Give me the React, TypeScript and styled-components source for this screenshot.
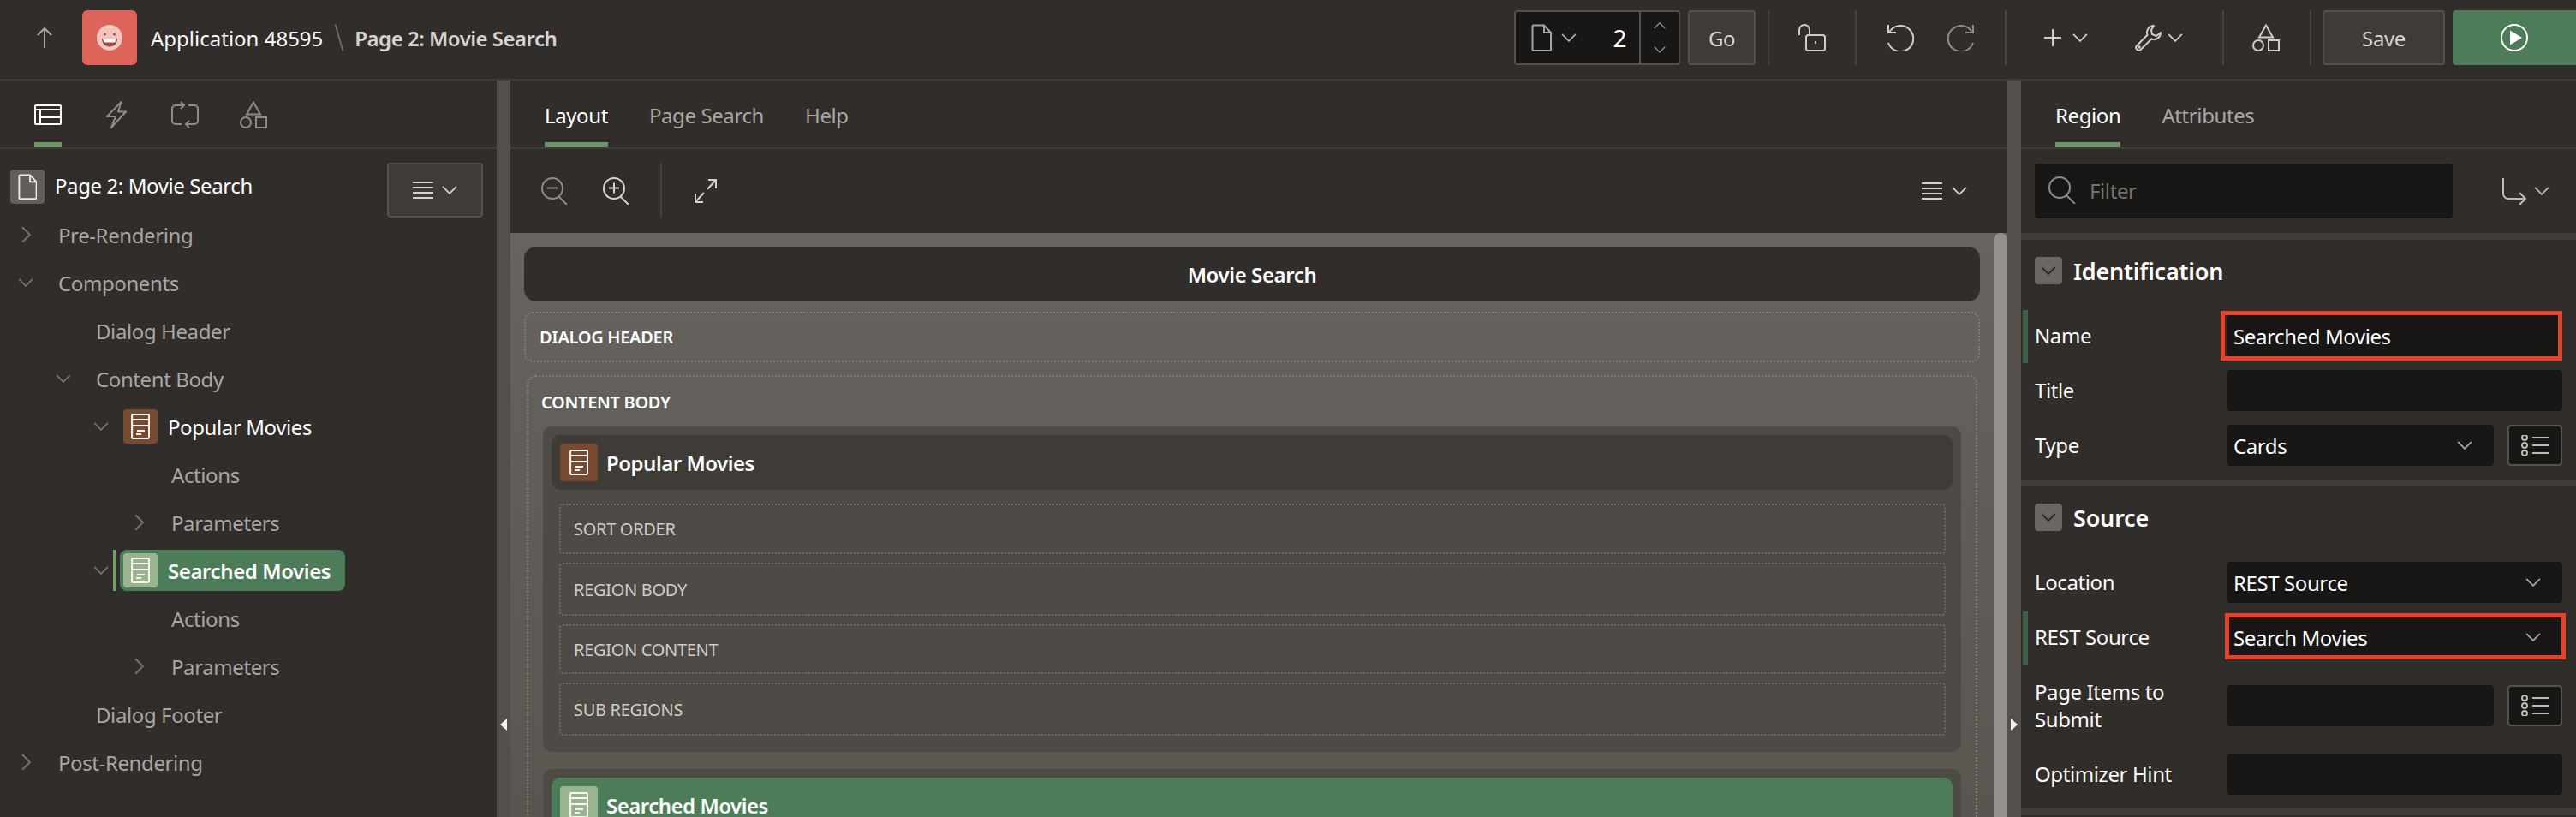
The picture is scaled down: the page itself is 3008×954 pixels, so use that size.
import * as React from 'react';
import styled, { createGlobalStyle } from 'styled-components';

const GlobalStyle = createGlobalStyle`
  html, body {
    margin: 0;
    height: 100%;
    background: #312d2a;
    font-family: "Noto Sans", "Open Sans", sans-serif;
    letter-spacing: -0.4px;
    color: #fff;
  }
  svg { display: block; flex: none; }
`;

const Page = styled.div`
  height: 100vh;
  display: flex;
  flex-direction: column;
  overflow: hidden;
`;

const Header = styled.header`
  height: 88px;
  padding-bottom: 4px;
  flex: none;
  display: flex;
  align-items: center;
  border-bottom: 2px solid #3f3b37;
  box-sizing: content-box;
`;

const UpButton = styled.div`
  width: 96px;
  display: flex;
  justify-content: center;
  padding-left: 8px;
  box-sizing: border-box;
  color: #a9a6a2;
`;

const Logo = styled.div`
  width: 64px;
  height: 64px;
  border-radius: 6px;
  background: #dc6459;
  display: flex;
  align-items: center;
  justify-content: center;
`;

const Crumbs = styled.div`
  display: flex;
  align-items: center;
  margin-left: 16px;
  font-size: 24px;
`;

const CrumbApp = styled.span`
  color: #fbf9f8;
  letter-spacing: 0;
`;

const CrumbSlash = styled.span`
  width: 2px;
  height: 32px;
  margin: 0 17px 0 18px;
  background: #6b6762;
  transform: rotate(-16deg);
`;

const CrumbPage = styled.span`
  color: #d6d3cf;
  font-weight: 600;
  letter-spacing: -0.5px;
`;

const Toolbar = styled.div`
  margin-left: auto;
  display: flex;
  align-items: center;
  height: 64px;
`;

const PageSelector = styled.div`
  width: 194px;
  height: 64px;
  box-sizing: border-box;
  border: 2px solid #54504b;
  border-radius: 4px;
  background: #181715;
  display: flex;
  align-items: stretch;
`;

const PagePicker = styled.div`
  flex: 1;
  display: flex;
  align-items: center;
  gap: 11px;
  padding-left: 18px;
  color: #a9a6a2;
  position: relative;
`;

const PageNumber = styled.span`
  margin-left: auto;
  margin-right: 15px;
  font-size: 28px;
  color: #fff;
`;

const Stepper = styled.div`
  width: 46px;
  border-left: 2px solid #54504b;
  display: flex;
  flex-direction: column;
  align-items: center;
  justify-content: space-between;
  padding: 12px 0;
  box-sizing: border-box;
  color: #8f8b87;
`;

const Button = styled.div<{ $w: number; $ml?: number }>`
  width: ${p => p.$w}px;
  height: 64px;
  margin-left: ${p => p.$ml ?? 0}px;
  box-sizing: border-box;
  border: 2px solid #54504b;
  border-radius: 4px;
  background: #3f3c37;
  color: #d6d3cf;
  font-size: 24px;
  display: flex;
  align-items: center;
  justify-content: center;
`;

const RunButton = styled.div`
  width: 144px;
  height: 64px;
  margin-left: 9px;
  background: #4c7d58;
  border-radius: 4px 0 0 4px;
  display: flex;
  align-items: center;
  justify-content: center;
  color: #fff;
`;

const Sep = styled.div<{ $h?: number }>`
  width: 2px;
  height: ${p => p.$h ?? 64}px;
  background: #45413d;
  flex: none;
`;

const ToolGroup = styled.div<{ $l: number; $r: number; $gap: number }>`
  display: flex;
  align-items: center;
  padding: 0 ${p => p.$r}px 0 ${p => p.$l}px;
  gap: ${p => p.$gap}px;
  color: #d0cdc9;
`;

const IconPair = styled.div<{ $gap: number; $dim?: boolean }>`
  display: flex;
  align-items: center;
  gap: ${p => p.$gap}px;
  color: ${p => (p.$dim ? '#8f8b87' : 'inherit')};
`;

const Body = styled.div`
  flex: 1;
  min-height: 0;
  display: grid;
  grid-template-columns: 580px 16px 1748px 16px 648px;
`;

const Panel = styled.section`
  display: flex;
  flex-direction: column;
  min-width: 0;
  min-height: 0;
  overflow: hidden;
  position: relative;
`;

const Splitter = styled.div`
  background: #544f4b;
  position: relative;
`;

const SplitterArrow = styled.div<{ $right?: boolean }>`
  position: absolute;
  top: 745px;
  left: 4px;
  width: 0;
  height: 0;
  border-top: 7px solid transparent;
  border-bottom: 7px solid transparent;
  ${p => (p.$right ? 'border-left: 8px solid #f4f2f0;' : 'border-right: 8px solid #f4f2f0;')}
`;

const Tabs = styled.div<{ $gap: number; $pad: number }>`
  height: 78px;
  flex: none;
  display: flex;
  gap: ${p => p.$gap}px;
  padding-left: ${p => p.$pad}px;
  border-bottom: 2px solid #3f3b37;
`;

const Tab = styled.div<{ $active?: boolean }>`
  height: 78px;
  box-sizing: border-box;
  border-bottom: 6px solid ${p => (p.$active ? '#6f946b' : 'transparent')};
  display: flex;
  align-items: center;
  padding-top: 8px;
  font-size: 24px;
  color: ${p => (p.$active ? '#fff' : '#a9a6a2')};
`;

const TreeRoot = styled.div`
  height: 72px;
  flex: none;
  box-sizing: border-box;
  padding: 24px 0 0 12px;
  display: flex;
  align-items: flex-start;
  gap: 12px;
  font-size: 24px;
`;

const RootIcon = styled.div`
  width: 40px;
  height: 40px;
  background: #625e59;
  border-radius: 4px;
  display: flex;
  align-items: center;
  justify-content: center;
  color: #eeecea;
`;

const RootLabel = styled.span`
  line-height: 38px;
`;

const TreeMenu = styled(Button)`
  position: absolute;
  top: 96px;
  right: 16px;
  gap: 10px;
`;

const TreeRow = styled.div<{ $level: number }>`
  height: 56px;
  flex: none;
  display: flex;
  align-items: center;
  padding-left: ${p => 8 + p.$level * 44}px;
  font-size: 24px;
  color: #a9a6a2;
  position: relative;
`;

const Twisty = styled.div`
  width: 44px;
  flex: none;
  display: flex;
  justify-content: center;
  color: #75716c;
`;

const TreeLabel = styled.span`
  margin-left: 16px;
`;

const NodePill = styled.div<{ $selected?: boolean }>`
  height: 48px;
  display: flex;
  align-items: center;
  gap: 12px;
  padding: 0 17px 0 4px;
  border-radius: 8px;
  background: ${p => (p.$selected ? '#4c7d58' : 'transparent')};
  color: #fff;
  font-weight: ${p => (p.$selected ? 600 : 400)};
`;

const SelectedMark = styled.div`
  position: absolute;
  left: 132px;
  top: 4px;
  width: 4px;
  height: 48px;
  background: #6f9d6d;
`;

const RegionIcon = styled.div<{ $tone: 'brown' | 'green'; $size: number }>`
  width: ${p => p.$size}px;
  height: ${p => p.$size}px;
  flex: none;
  border-radius: 4px;
  background: ${p => (p.$tone === 'brown' ? '#794a32' : '#98b58f')};
  display: flex;
  align-items: center;
  justify-content: center;
  color: #f9f4ee;
`;

const CanvasTools = styled.div`
  height: 98px;
  flex: none;
  display: flex;
  align-items: center;
  padding: 0 47px 0 36px;
  color: #d6d3cf;
`;

const ZoomTool = styled.div<{ $dim?: boolean; $w: number }>`
  width: ${p => p.$w}px;
  color: ${p => (p.$dim ? '#8f8b87' : '#d6d3cf')};
`;

const Expand = styled.div`
  margin-left: 38px;
`;

const MenuTool = styled.div`
  margin-left: auto;
  display: flex;
  align-items: center;
  gap: 11px;
`;

const Canvas = styled.div`
  flex: 1;
  min-height: 0;
  position: relative;
  overflow: hidden;
  background: linear-gradient(#67635e, #59554f);
  padding: 16px 32px 0 16px;
`;

const Scrollbar = styled.div`
  position: absolute;
  top: 0;
  right: 0;
  bottom: 0;
  width: 16px;
  background: #94908c;
  border-radius: 8px 8px 0 0;
`;

const TitleBar = styled.div`
  height: 64px;
  background: #312d2a;
  border-radius: 14px;
  display: flex;
  align-items: center;
  justify-content: center;
  font-size: 24px;
  font-weight: 600;
`;

const Zone = styled.div`
  border: 2px dotted #807c77;
  border-radius: 10px;
  box-sizing: border-box;
  font-weight: 600;
  font-size: 20px;
  letter-spacing: -0.3px;
`;

const HeaderZone = styled(Zone)`
  height: 59px;
  margin-top: 12px;
  display: flex;
  align-items: center;
  padding-left: 16px;
`;

const BodyZone = styled(Zone)`
  margin: 15px 3px 0;
  padding: 0 17px;
  height: 600px;
  border-bottom: none;
`;

const BodyLabel = styled.div`
  height: 58px;
  display: flex;
  align-items: center;
  margin-left: -2px;
`;

const Region = styled.div`
  background: #4e4a46;
  border-radius: 10px;
  padding: 10px 10px 19px;
  margin-bottom: 20px;
`;

const RegionHead = styled.div<{ $selected?: boolean }>`
  height: 64px;
  border-radius: 10px;
  background: ${p => (p.$selected ? '#4c7d58' : '#3f3c37')};
  display: flex;
  align-items: center;
  gap: 10px;
  padding-left: 10px;
  font-size: 24px;
  font-weight: 600;
  letter-spacing: -0.5px;
`;

const RegionZones = styled.div`
  display: flex;
  flex-direction: column;
  gap: 10px;
  margin: 16px 8px 0 9px;
`;

const SlotZone = styled.div<{ $h: number }>`
  height: ${p => p.$h}px;
  box-sizing: border-box;
  border: 2px dotted #6d6964;
  border-radius: 4px;
  display: flex;
  align-items: center;
  padding-left: 15px;
  font-size: 20px;
  font-weight: 400;
  color: #d0cdc9;
`;

const FilterBar = styled.div`
  height: 98px;
  flex: none;
  display: flex;
  align-items: center;
  padding-left: 16px;
`;

const FilterInput = styled.div`
  width: 488px;
  height: 64px;
  background: #181715;
  border-radius: 4px;
  display: flex;
  align-items: center;
  gap: 16px;
  padding: 0 0 2px 16px;
  box-sizing: border-box;
  font-size: 24px;
  color: #75716c;
`;

const GoTo = styled.div`
  margin-left: 58px;
  display: flex;
  align-items: center;
  gap: 9px;
  color: #bdbab6;
`;

const Section = styled.div`
  border-top: 8px solid #3f3c37;
  padding: 20px 16px 16px;
  display: flex;
  flex-direction: column;
  gap: 16px;
`;

const SectionHead = styled.div`
  height: 32px;
  margin-bottom: 20px;
  display: flex;
  align-items: center;
  gap: 13px;
  font-size: 27px;
  font-weight: 600;
  letter-spacing: -0.2px;
`;

const Collapse = styled.div`
  width: 32px;
  height: 32px;
  border-radius: 4px;
  background: #6a6661;
  display: flex;
  align-items: center;
  justify-content: center;
  color: #262320;
`;

const Field = styled.div<{ $tall?: boolean }>`
  position: relative;
  display: grid;
  grid-template-columns: 224px 1fr;
  align-items: center;
  min-height: ${p => (p.$tall ? 64 : 48)}px;
  margin: ${p => (p.$tall ? '8px 0' : '0')};
`;

const FieldLabel = styled.div`
  font-size: 24px;
  line-height: 32px;
  color: #fbf9f8;
`;

const Controls = styled.div`
  display: flex;
  gap: 16px;
`;

const Control = styled.div`
  flex: 1;
  height: 48px;
  box-sizing: border-box;
  background: #181715;
  border-radius: 4px;
  padding: 0 25px 0 8px;
  display: flex;
  align-items: center;
  justify-content: space-between;
  font-size: 24px;
  color: #fff;
`;

const ControlChevron = styled.span`
  color: #a9a6a2;
`;

const LovButton = styled.div`
  width: 64px;
  height: 48px;
  flex: none;
  box-sizing: border-box;
  background: #181715;
  border: 2px solid #54504b;
  border-radius: 4px;
  display: flex;
  align-items: center;
  justify-content: center;
  color: #bdbab6;
`;

const ChangedMark = styled.div`
  position: absolute;
  left: -14px;
  top: -6px;
  bottom: -8px;
  width: 6px;
  background: #3f5f48;
`;

const Callout = styled.div<{ $offset: string }>`
  position: absolute;
  inset: ${p => p.$offset};
  border: 5px solid #e8412a;
  box-sizing: border-box;
  pointer-events: none;
`;

const Chevron = ({ dir = 'down', size = 18 }: { dir?: 'down' | 'up' | 'right'; size?: number }) => {
  const h = size * 0.55;
  if (dir === 'right') {
    return (
      <svg width={h} height={size} viewBox="0 0 10 18" fill="none" stroke="currentColor" strokeWidth="1.8">
        <path d="M1 1l8 8-8 8" />
      </svg>
    );
  }
  return (
    <svg width={size} height={h} viewBox="0 0 18 10" fill="none" stroke="currentColor" strokeWidth="1.8">
      <path d={dir === 'down' ? 'M1 1l8 8 8-8' : 'M1 9l8-8 8 8'} />
    </svg>
  );
};

const Smiley = () => (
  <svg width="30" height="30" viewBox="0 0 30 30">
    <circle cx="15" cy="15" r="15" fill="#f1c6bf" />
    <circle cx="9.5" cy="11" r="1.6" fill="#a8564c" />
    <circle cx="20.5" cy="11" r="1.6" fill="#a8564c" />
    <path d="M6 16h18c0 6-4 9.5-9 9.5S6 22 6 16z" fill="#a8473d" />
    <path d="M7.500 17h15c-.3 2-1 3-1.500 3.500H9C8.500 20 7.800 19 7.500 17z" fill="#fff" />
  </svg>
);

const UpArrow = () => (
  <svg width="20" height="26" viewBox="0 0 20 26" fill="none" stroke="currentColor" strokeWidth="2">
    <path d="M10 25V2M2 10l8-8 8 8" />
  </svg>
);

const PageDoc = ({ size = 32 }: { size?: number }) => (
  <svg width={size * 0.75} height={size} viewBox="0 0 24 32" fill="none" stroke="currentColor" strokeWidth="2">
    <path d="M1.500 2.500a1 1 0 0 1 1-1H15L23 10v20a1 1 0 0 1-1 1H2.500a1 1 0 0 1-1-1z" />
    <path d="M15 1.500V10h8" />
  </svg>
);

const Lock = () => (
  <svg width="32" height="32" viewBox="0 0 32 32" fill="none" stroke="currentColor" strokeWidth="2">
    <rect x="9" y="13" width="22" height="18" rx="2.500" />
    <path d="M1 13V7a6 6 0 0 1 12 0v6" />
    <path d="M20 20v3" />
  </svg>
);

const Undo = ({ flip }: { flip?: boolean }) => (
  <svg width="32" height="32" viewBox="0 0 32 32" fill="none" stroke="currentColor" strokeWidth="2" style={flip ? { transform: 'scaleX(-1)' } : undefined}>
    <path d="M3 9A15 15 0 1 1 2 21" transform="translate(0 1)" />
    <path d="M2 1v9h9" />
  </svg>
);

const Plus = () => (
  <svg width="20" height="20" viewBox="0 0 20 20" fill="none" stroke="currentColor" strokeWidth="2">
    <path d="M10 0v20M0 10h20" />
  </svg>
);

const Wrench = () => (
  <svg width="32" height="32" viewBox="0 0 32 32" fill="none" stroke="currentColor" strokeWidth="2">
    <path d="M22 2a8 8 0 0 0-7.500 10.800L2 25.500a3.200 3.200 0 0 0 4.500 4.500L19.200 17.500A8 8 0 0 0 30 10l-5 4-5-2-1-5z" strokeLinejoin="round" />
    <circle cx="5" cy="27" r=".8" />
  </svg>
);

const Shapes = () => (
  <svg width="32" height="32" viewBox="0 0 32 32" fill="none" stroke="currentColor" strokeWidth="2">
    <path d="M16 1.500l8 14H8z" />
    <circle cx="7" cy="25" r="6" />
    <rect x="19" y="19" width="12" height="12" />
  </svg>
);

const PlayCircle = () => (
  <svg width="32" height="32" viewBox="0 0 32 32">
    <circle cx="16" cy="16" r="15" fill="none" stroke="currentColor" strokeWidth="2" />
    <path d="M11 7.500l14 8.500-14 8.500z" fill="currentColor" />
  </svg>
);

const LinesIcon = () => (
  <svg width="24" height="20" viewBox="0 0 24 20" fill="none" stroke="currentColor" strokeWidth="2">
    <path d="M0 1h24M0 7h24M0 13h24M0 19h24" />
  </svg>
);

const LayoutIcon = () => (
  <svg width="32" height="24" viewBox="0 0 32 24" fill="none" stroke="#fff" strokeWidth="2">
    <rect x="1" y="1" width="30" height="22" rx="1" />
    <path d="M1 6h30M7 15h24M7 6v17" />
  </svg>
);

const Bolt = () => (
  <svg width="32" height="32" viewBox="-4 0 32 32" fill="none" stroke="currentColor" strokeWidth="2" strokeLinejoin="round">
    <path d="M17.500 1L1 18h10L6 31l17-18.500h-9z" />
  </svg>
);

const Loop = () => (
  <svg width="32" height="32" viewBox="0 0 32 32" fill="none" stroke="currentColor" strokeWidth="2">
    <path d="M15 5H5a4 4 0 0 0-4 4v14a4 4 0 0 0 4 4h7" />
    <path d="M20 5h7a4 4 0 0 1 4 4v14a4 4 0 0 1-4 4H17" />
    <path d="M11 1l4 4-4 4M21 23l-4 4 4 4" />
  </svg>
);

const ZoomGlass = ({ plus }: { plus?: boolean }) => (
  <svg width="32" height="32" viewBox="0 0 32 32" fill="none" stroke="currentColor" strokeWidth="2">
    <circle cx="13" cy="13" r="12" />
    <path d="M21 23l9 9M7 12.500h12" />
    {plus && <path d="M13 6.500v12" />}
  </svg>
);

const ExpandIcon = () => (
  <svg width="26" height="28" viewBox="0 0 26 28" fill="none" stroke="currentColor" strokeWidth="2">
    <path d="M15 12L25 1M16 1h9v10M11 16L1 27M1 17v10h9" />
  </svg>
);

const SearchIcon = () => (
  <svg width="32" height="32" viewBox="0 0 32 32" fill="none" stroke="#8f8b87" strokeWidth="2">
    <circle cx="13" cy="13" r="12" />
    <path d="M21 22l10 10" />
  </svg>
);

const GoToIcon = () => (
  <svg width="28" height="32" viewBox="0 0 28 32" fill="none" stroke="currentColor" strokeWidth="2">
    <path d="M1 1v18a6 6 0 0 0 6 6h20M20 18l7 7-7 7" />
  </svg>
);

const ListIcon = () => (
  <svg width="32" height="24" viewBox="0 0 32 24" fill="none" stroke="currentColor" strokeWidth="2">
    <circle cx="4" cy="3" r="3" />
    <circle cx="4" cy="12" r="3" />
    <circle cx="4" cy="21" r="3" />
    <path d="M13 3h19M13 12h19M13 21h19" />
  </svg>
);

const RegionGlyph = ({ size = 26 }: { size?: number }) => (
  <svg width={size * 0.85} height={size * 1.15} viewBox="0 0 22 30" fill="none" stroke="currentColor" strokeWidth="2">
    <rect x="1" y="1" width="20" height="28" rx="1" />
    <path d="M1 7h20M1 14h20M7 20h9M6 24h6" />
  </svg>
);

const TreeNode = ({ label, level, open }: { label: string; level: number; open?: boolean }) => (
  <TreeRow $level={level}>
    <Twisty>{open === undefined ? null : open ? <Chevron /> : <Chevron dir="right" size={20} />}</Twisty>
    <TreeLabel>{label}</TreeLabel>
  </TreeRow>
);

export default function App(): JSX.Element {
  return (
    <Page>
      <GlobalStyle />
      <Header>
        <UpButton>
          <UpArrow />
        </UpButton>
        <Logo>
          <Smiley />
        </Logo>
        <Crumbs>
          <CrumbApp>Application 48595</CrumbApp>
          <CrumbSlash />
          <CrumbPage>Page 2: Movie Search</CrumbPage>
        </Crumbs>
        <Toolbar>
          <PageSelector>
            <PagePicker>
              <PageDoc />
              <Chevron />
              <PageNumber>2</PageNumber>
            </PagePicker>
            <Stepper>
              <Chevron dir="up" size={14} />
              <Chevron size={14} />
            </Stepper>
          </PageSelector>
          <Button $w={79} $ml={9}>Go</Button>
          <ToolGroup $l={14} $r={0} $gap={0}>
            <Sep />
          </ToolGroup>
          <ToolGroup $l={34} $r={34} $gap={0}>
            <Lock />
          </ToolGroup>
          <Sep />
          <ToolGroup $l={35} $r={35} $gap={39}>
            <Undo />
            <IconPair $gap={0} $dim>
              <Undo flip />
            </IconPair>
          </ToolGroup>
          <Sep />
          <ToolGroup $l={44} $r={46} $gap={55}>
            <IconPair $gap={13}>
              <Plus />
              <Chevron />
            </IconPair>
            <IconPair $gap={6}>
              <Wrench />
              <Chevron />
            </IconPair>
          </ToolGroup>
          <Sep />
          <ToolGroup $l={33} $r={35} $gap={0}>
            <Shapes />
          </ToolGroup>
          <Sep />
          <Button $w={143} $ml={13}>Save</Button>
          <RunButton>
            <PlayCircle />
          </RunButton>
        </Toolbar>
      </Header>
      <Body>
        <Panel>
          <Tabs $gap={48} $pad={40}>
            <Tab $active><LayoutIcon /></Tab>
            <Tab><IconPair $gap={0} $dim><Bolt /></IconPair></Tab>
            <Tab><IconPair $gap={0} $dim><Loop /></IconPair></Tab>
            <Tab><IconPair $gap={0} $dim><Shapes /></IconPair></Tab>
          </Tabs>
          <TreeRoot>
            <RootIcon><PageDoc size={30} /></RootIcon>
            <RootLabel>Page 2: Movie Search</RootLabel>
          </TreeRoot>
          <TreeMenu $w={112}>
            <LinesIcon />
            <Chevron />
          </TreeMenu>
          <TreeNode label="Pre-Rendering" level={0} open={false} />
          <TreeNode label="Components" level={0} open />
          <TreeNode label="Dialog Header" level={1} />
          <TreeNode label="Content Body" level={1} open />
          <TreeRow $level={2}>
            <Twisty><Chevron /></Twisty>
            <NodePill>
              <RegionIcon $tone="brown" $size={40}><RegionGlyph /></RegionIcon>
              Popular Movies
            </NodePill>
          </TreeRow>
          <TreeNode label="Actions" level={3} />
          <TreeNode label="Parameters" level={3} open={false} />
          <TreeRow $level={2}>
            <Twisty><Chevron /></Twisty>
            <SelectedMark />
            <NodePill $selected>
              <RegionIcon $tone="green" $size={40}><RegionGlyph /></RegionIcon>
              Searched Movies
            </NodePill>
          </TreeRow>
          <TreeNode label="Actions" level={3} />
          <TreeNode label="Parameters" level={3} open={false} />
          <TreeNode label="Dialog Footer" level={1} />
          <TreeNode label="Post-Rendering" level={0} open={false} />
        </Panel>
        <Splitter>
          <SplitterArrow />
        </Splitter>
        <Panel>
          <Tabs $gap={48} $pad={40}>
            <Tab $active>Layout</Tab>
            <Tab>Page Search</Tab>
            <Tab>Help</Tab>
          </Tabs>
          <CanvasTools>
            <ZoomTool $dim $w={72}><ZoomGlass /></ZoomTool>
            <ZoomTool $w={67}><ZoomGlass plus /></ZoomTool>
            <Sep />
            <Expand><ExpandIcon /></Expand>
            <MenuTool>
              <LinesIcon />
              <Chevron />
            </MenuTool>
          </CanvasTools>
          <Canvas>
            <TitleBar>Movie Search</TitleBar>
            <HeaderZone>DIALOG HEADER</HeaderZone>
            <BodyZone>
              <BodyLabel>CONTENT BODY</BodyLabel>
              <Region>
                <RegionHead>
                  <RegionIcon $tone="brown" $size={44}><RegionGlyph /></RegionIcon>
                  Popular Movies
                </RegionHead>
                <RegionZones>
                  <SlotZone $h={59}>SORT ORDER</SlotZone>
                  <SlotZone $h={62}>REGION BODY</SlotZone>
                  <SlotZone $h={58}>REGION CONTENT</SlotZone>
                  <SlotZone $h={62}>SUB REGIONS</SlotZone>
                </RegionZones>
              </Region>
              <Region>
                <RegionHead $selected>
                  <RegionIcon $tone="green" $size={44}><RegionGlyph /></RegionIcon>
                  Searched Movies
                </RegionHead>
              </Region>
            </BodyZone>
            <Scrollbar />
          </Canvas>
        </Panel>
        <Splitter>
          <SplitterArrow $right />
        </Splitter>
        <Panel>
          <Tabs $gap={48} $pad={40}>
            <Tab $active>Region</Tab>
            <Tab>Attributes</Tab>
          </Tabs>
          <FilterBar>
            <FilterInput>
              <SearchIcon />
              Filter
            </FilterInput>
            <GoTo>
              <GoToIcon />
              <Chevron />
            </GoTo>
          </FilterBar>
          <Section>
            <SectionHead>
              <Collapse><Chevron /></Collapse>
              Identification
            </SectionHead>
            <Field>
              <ChangedMark />
              <FieldLabel>Name</FieldLabel>
              <Controls><Control>Searched Movies</Control></Controls>
              <Callout $offset="-5px 0 -5px 217px" />
            </Field>
            <Field>
              <FieldLabel>Title</FieldLabel>
              <Controls><Control /></Controls>
            </Field>
            <Field>
              <FieldLabel>Type</FieldLabel>
              <Controls>
                <Control>Cards<ControlChevron><Chevron /></ControlChevron></Control>
                <LovButton><ListIcon /></LovButton>
              </Controls>
            </Field>
          </Section>
          <Section>
            <SectionHead>
              <Collapse><Chevron /></Collapse>
              Source
            </SectionHead>
            <Field>
              <FieldLabel>Location</FieldLabel>
              <Controls><Control>REST Source<ControlChevron><Chevron /></ControlChevron></Control></Controls>
            </Field>
            <Field>
              <ChangedMark />
              <FieldLabel>REST Source</FieldLabel>
              <Controls><Control>Search Movies<ControlChevron><Chevron /></ControlChevron></Control></Controls>
              <Callout $offset="-4px -4px -2px 222px" />
            </Field>
            <Field $tall>
              <FieldLabel>Page Items to Submit</FieldLabel>
              <Controls>
                <Control />
                <LovButton><ListIcon /></LovButton>
              </Controls>
            </Field>
            <Field>
              <FieldLabel>Optimizer Hint</FieldLabel>
              <Controls><Control /></Controls>
            </Field>
          </Section>
          <Section />
        </Panel>
      </Body>
    </Page>
  );
}
